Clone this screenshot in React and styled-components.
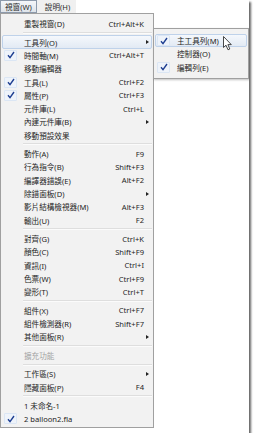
import React from 'react';
import styled, { createGlobalStyle } from 'styled-components';

const GlobalStyle = createGlobalStyle`
  body {
    margin: 0;
    background: #fff;
    font-family: "Noto Sans", "Noto Sans CJK TC", sans-serif;
  }
`;

const Frame = styled.div`
  position: relative;
  width: 249px;
  height: 433px;
  background: #fff;
  box-shadow: 2px 2px 2px rgba(0, 0, 0, 0.6);
  overflow: hidden;
  font-size: 7.6px;
  color: #1e1e1e;
`;

const MenuBar = styled.div`
  display: flex;
  align-items: stretch;
  width: 76px;
  height: 13px;
  background: #f0f0f0;
  white-space: nowrap;
`;

const BarItem = styled.div`
  display: flex;
  align-items: center;
  flex-shrink: 0;
  box-sizing: border-box;
  padding: 0 4px;
  margin-right: 3px;
  border: 1px solid ${p => (p.$active ? '#8d9aab' : 'transparent')};
  background: ${p => (p.$active ? 'linear-gradient(#f4f6f9, #dfe4ea)' : 'transparent')};
  color: #2a2a2a;
`;

const Menu = styled.div`
  box-sizing: border-box;
  width: 154px;
  padding: 3px 1px 1px;
  background: #f2f2f2;
  border: 1px solid #a0a0a0;
  position: relative;
`;

const SubMenu = styled(Menu)`
  position: absolute;
  left: 153px;
  top: 28px;
  width: 96px;
  padding: 5px 1px 4px;
  box-shadow: 1px 1px 2px rgba(0, 0, 0, 0.25);
`;

const Row = styled.div`
  display: grid;
  grid-template-columns: 20px 1fr auto 7px;
  align-items: center;
  box-sizing: border-box;
  height: 13.3px;
  border: 1px solid ${p => (p.$hover ? '#bfd2ea' : 'transparent')};
  border-radius: 2px;
  background: ${p => (p.$hover ? 'linear-gradient(#f5f8fc, #e2eaf4)' : 'transparent')};
  color: ${p => (p.$disabled ? '#a3a3a3' : '#1e1e1e')};
  white-space: nowrap;
`;

const CheckBox = styled.span`
  display: flex;
  align-items: center;
  justify-content: center;
  width: 13px;
  height: 11px;
  margin-left: 1px;
  box-sizing: border-box;
  border: 1px solid ${p => (p.$on ? '#dbe6f4' : 'transparent')};
  background: ${p => (p.$on ? '#eef3fa' : 'transparent')};
  border-radius: 1px;
`;

const Label = styled.span`
  padding-left: 1px;
`;

const Shortcut = styled.span`
  text-align: right;
`;

const Arrow = styled.span`
  justify-self: center;
  width: 0;
  height: 0;
  border-top: 2.5px solid transparent;
  border-bottom: 2.5px solid transparent;
  border-left: 3px solid #222;
`;

const Separator = styled.div`
  height: 5.2px;
  display: flex;
  align-items: center;
  padding-left: 21px;

  &::after {
    content: '';
    flex: 1;
    height: 1px;
    background: #dedede;
    border-bottom: 1px solid #fbfbfb;
  }
`;

const Cursor = styled.svg`
  position: absolute;
  left: 223px;
  top: 36px;
`;

const Check = () => (
  <svg width="8" height="8" viewBox="0 0 8 8">
    <path d="M1 4.2 L3 6.6 L7 1" fill="none" stroke="#1d3e91" strokeWidth="1.4" />
  </svg>
);

const groups = [
  [{ label: '重製視窗(D)', key: 'Ctrl+Alt+K' }],
  [
    { label: '工具列(O)', sub: true, hover: true },
    { label: '時間軸(M)', key: 'Ctrl+Alt+T', checked: true },
    { label: '移動編輯器' },
    { label: '工具(L)', key: 'Ctrl+F2', checked: true },
    { label: '屬性(P)', key: 'Ctrl+F3', checked: true },
    { label: '元件庫(L)', key: 'Ctrl+L' },
    { label: '內建元件庫(B)', sub: true },
    { label: '移動預設效果' },
  ],
  [
    { label: '動作(A)', key: 'F9' },
    { label: '行為指令(B)', key: 'Shift+F3' },
    { label: '編譯器錯誤(E)', key: 'Alt+F2' },
    { label: '除錯面板(D)', sub: true },
    { label: '影片結構檢視器(M)', key: 'Alt+F3' },
    { label: '輸出(U)', key: 'F2' },
  ],
  [
    { label: '對齊(G)', key: 'Ctrl+K' },
    { label: '顏色(C)', key: 'Shift+F9' },
    { label: '資訊(I)', key: 'Ctrl+I' },
    { label: '色票(W)', key: 'Ctrl+F9' },
    { label: '變形(T)', key: 'Ctrl+T' },
  ],
  [
    { label: '組件(X)', key: 'Ctrl+F7' },
    { label: '組件檢測器(R)', key: 'Shift+F7' },
    { label: '其他面板(R)', sub: true },
  ],
  [{ label: '擴充功能', disabled: true }],
  [
    { label: '工作區(S)', sub: true },
    { label: '隱藏面板(P)', key: 'F4' },
  ],
  [
    { label: '1 未命名-1' },
    { label: '2 balloon2.fla', checked: true },
  ],
];

const toolbars = [
  { label: '主工具列(M)', checked: true, hover: true },
  { label: '控制器(O)' },
  { label: '編輯列(E)', checked: true },
];

const Item = ({ item }) => (
  <Row $hover={item.hover} $disabled={item.disabled}>
    <CheckBox $on={item.checked}>{item.checked && <Check />}</CheckBox>
    <Label>{item.label}</Label>
    <Shortcut>{item.key}</Shortcut>
    {item.sub ? <Arrow /> : <span />}
  </Row>
);

export default function App() {
  return (
    <>
      <GlobalStyle />
      <Frame>
        <MenuBar>
          <BarItem $active>視窗(W)</BarItem>
          <BarItem>說明(H)</BarItem>
        </MenuBar>
        <Menu>
          {groups.map((group, gi) => (
            <React.Fragment key={gi}>
              {gi > 0 && <Separator />}
              {group.map(item => (
                <Item key={item.label} item={item} />
              ))}
            </React.Fragment>
          ))}
        </Menu>
        <SubMenu>
          {toolbars.map(item => (
            <Item key={item.label} item={item} />
          ))}
        </SubMenu>
        <Cursor width="10" height="15" viewBox="0 0 10 15">
          <path
            d="M0.5 0.5 L0.5 11.5 L3 9.2 L5 13.8 L6.8 13 L4.9 8.6 L8.3 8.6 Z"
            fill="#fff"
            stroke="#333"
            strokeWidth="0.9"
            strokeLinejoin="round"
          />
        </Cursor>
      </Frame>
    </>
  );
}
